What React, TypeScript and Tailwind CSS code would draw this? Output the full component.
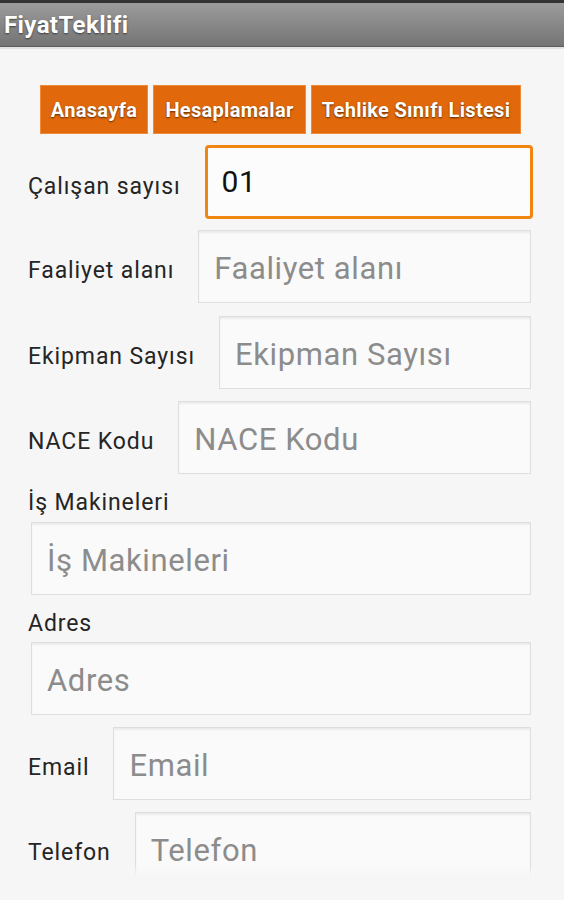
import React from "react";

const font = { fontFamily: "Roboto, 'Noto Sans', 'Liberation Sans', sans-serif" };

function Field({ placeholder, value, focused }: { placeholder: string; value?: string; focused?: boolean }) {
  return (
    <div
      className={
        focused
          ? "flex-1 -mr-[2px] h-[74px] rounded-[4px] border-[3px] border-[#f0850f] bg-[#fcfcfc] flex items-center pl-[14px]"
          : "flex-1 h-[73px] border border-[#dedede] bg-[#fafafa] shadow-[inset_0_2px_2px_rgba(0,0,0,0.06)] flex items-center pl-[15px]"
      }
    >
      {value ? (
        <span className="text-[30px] text-[#111] leading-none tracking-[0.5px]">{value}</span>
      ) : (
        <span className="text-[31px] text-[#8c8c8c] leading-none tracking-[0.6px] pt-[3px]">{placeholder}</span>
      )}
    </div>
  );
}

function Row({ label, focused, value }: { label: string; focused?: boolean; value?: string }) {
  return (
    <div className="flex items-center gap-[24px]">
      <span className="text-[23px] text-[#252525] leading-none pt-[8px] whitespace-nowrap tracking-[0.9px]">{label}</span>
      <Field placeholder={label} focused={focused} value={value} />
    </div>
  );
}

function Stacked({ label, gap }: { label: string; gap: string }) {
  return (
    <div className="flex flex-col">
      <span className="text-[23px] text-[#252525] leading-[28px] tracking-[0.9px]">{label}</span>
      <div className={`pl-[3px] ${gap} flex`}>
        <Field placeholder={label} />
      </div>
    </div>
  );
}

export default function App() {
  return (
    <div className="w-[564px] h-[900px] bg-[#f6f6f6] relative overflow-hidden" style={font}>
      <div className="h-[3px] bg-[#333]" />
      <div className="h-[44px] bg-gradient-to-b from-[#9c9c9c] to-[#747474] border-b border-[#5d5d5d] flex items-center pl-[4px]">
        <span className="text-white font-bold text-[24px] tracking-[0.4px] [text-shadow:0_1px_2px_rgba(0,0,0,0.55)]">FiyatTeklifi</span>
      </div>
      <div className="h-[2px] bg-[#e2e2e2]" />

      <div className="flex justify-center gap-[5px] mt-[36px] pr-[3px]">
        {[
          ["Anasayfa", "w-[108px]"],
          ["Hesaplamalar", "w-[153px]"],
          ["Tehlike Sınıfı Listesi", "w-[210px]"],
        ].map(([t, w]) => (
          <div
            key={t}
            className={`${w} h-[49px] bg-[#e2690b] border border-[#ef8a3a] flex items-center justify-center text-white font-bold text-[20px] tracking-[0.3px] [text-shadow:0_1px_2px_rgba(0,0,0,0.6)]`}
          >
            {t}
          </div>
        ))}
      </div>

      <div className="pl-[28px] pr-[33px] mt-[11px] flex flex-col">
        <Row label="Çalışan sayısı" focused value="01" />
        <div className="h-[11px]" />
        <Row label="Faaliyet alanı" />
        <div className="h-[13px]" />
        <Row label="Ekipman Sayısı" />
        <div className="h-[12px]" />
        <Row label="NACE Kodu" />
        <div className="h-[15px]" />
        <Stacked label="İş Makineleri" gap="mt-[5px]" />
        <div className="h-[15px]" />
        <Stacked label="Adres" gap="mt-[4px]" />
        <div className="h-[12px]" />
        <Row label="Email" />
        <div className="h-[12px]" />
        <Row label="Telefon" />
      </div>

      <div className="absolute left-0 right-0 bottom-0 h-[36px] bg-gradient-to-b from-transparent to-[#f6f6f6] to-[35%]" />
    </div>
  );
}
